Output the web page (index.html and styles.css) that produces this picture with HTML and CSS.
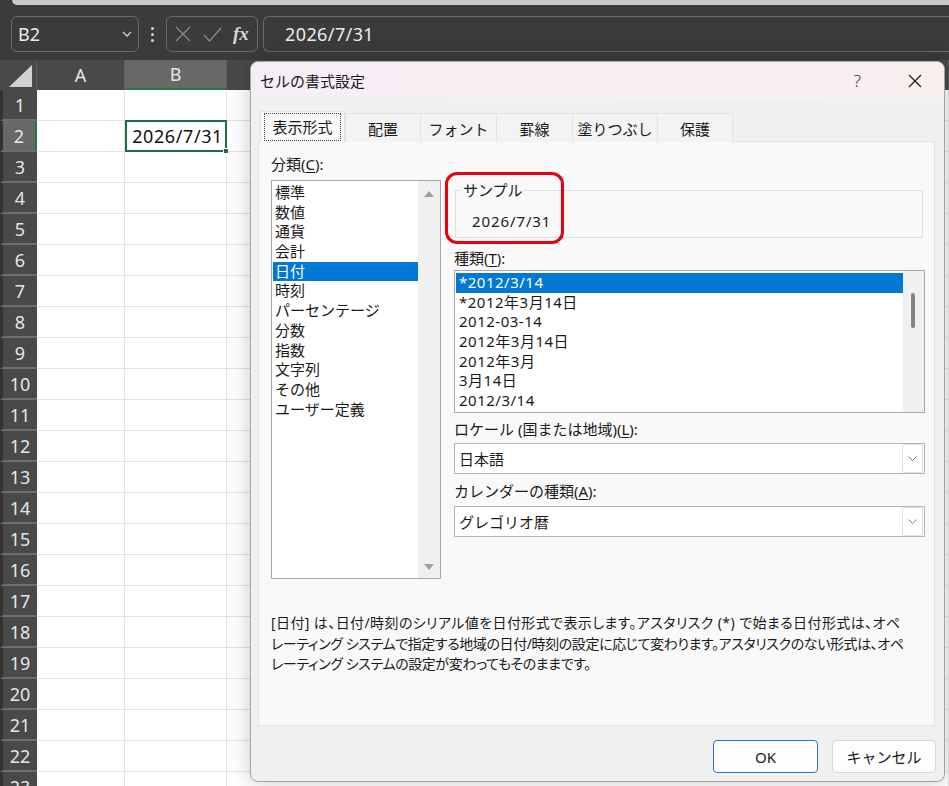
FILE: index.html
```html
<!DOCTYPE html>
<html lang="ja">
<head>
    <meta charset="UTF-8">
    <meta name="viewport" content="width=device-width, initial-scale=1.0">
    <title>セルの書式設定</title>
    <link rel="stylesheet" href="styles.css">
</head>
<body>
    <div class="ribbon-edge"></div>

    <div class="formula-bar">
        <div class="name-box">
            <span>B2</span>
            <svg width="10" height="6" viewBox="0 0 10 6"><path d="M1 1l4 4 4-4" fill="none" stroke="#d4d4d4" stroke-width="1.3"/></svg>
        </div>
        <div class="grip"><i></i><i></i><i></i></div>
        <div class="fx-box">
            <svg width="16" height="16" viewBox="0 0 16 16"><path d="M1 1l14 14M15 1L1 15" stroke="#8c8c8c" stroke-width="1.2"/></svg>
            <svg width="19" height="15" viewBox="0 0 19 15"><path d="M1 8l5.5 6L18 1" fill="none" stroke="#8c8c8c" stroke-width="1.2"/></svg>
            <span class="fx">fx</span>
        </div>
        <div class="formula-input">2026/7/31</div>
    </div>

    <div class="sheet">
        <div class="corner"><i></i></div>
        <div class="ch">A</div>
        <div class="ch sel">B</div>
        <div class="ch"></div>

        <div class="rh">1</div><div class="cell"></div><div class="cell"></div><div class="cell"></div>
        <div class="rh sel">2</div><div class="cell"></div><div class="cell active">2026/7/31<i></i></div><div class="cell"></div>
        <div class="rh">3</div><div class="cell"></div><div class="cell"></div><div class="cell"></div>
        <div class="rh">4</div><div class="cell"></div><div class="cell"></div><div class="cell"></div>
        <div class="rh">5</div><div class="cell"></div><div class="cell"></div><div class="cell"></div>
        <div class="rh">6</div><div class="cell"></div><div class="cell"></div><div class="cell"></div>
        <div class="rh">7</div><div class="cell"></div><div class="cell"></div><div class="cell"></div>
        <div class="rh">8</div><div class="cell"></div><div class="cell"></div><div class="cell"></div>
        <div class="rh">9</div><div class="cell"></div><div class="cell"></div><div class="cell"></div>
        <div class="rh">10</div><div class="cell"></div><div class="cell"></div><div class="cell"></div>
        <div class="rh">11</div><div class="cell"></div><div class="cell"></div><div class="cell"></div>
        <div class="rh">12</div><div class="cell"></div><div class="cell"></div><div class="cell"></div>
        <div class="rh">13</div><div class="cell"></div><div class="cell"></div><div class="cell"></div>
        <div class="rh">14</div><div class="cell"></div><div class="cell"></div><div class="cell"></div>
        <div class="rh">15</div><div class="cell"></div><div class="cell"></div><div class="cell"></div>
        <div class="rh">16</div><div class="cell"></div><div class="cell"></div><div class="cell"></div>
        <div class="rh">17</div><div class="cell"></div><div class="cell"></div><div class="cell"></div>
        <div class="rh">18</div><div class="cell"></div><div class="cell"></div><div class="cell"></div>
        <div class="rh">19</div><div class="cell"></div><div class="cell"></div><div class="cell"></div>
        <div class="rh">20</div><div class="cell"></div><div class="cell"></div><div class="cell"></div>
        <div class="rh">21</div><div class="cell"></div><div class="cell"></div><div class="cell"></div>
        <div class="rh">22</div><div class="cell"></div><div class="cell"></div><div class="cell"></div>
        <div class="rh">23</div><div class="cell"></div><div class="cell"></div><div class="cell"></div>
    </div>

    <div class="dialog">
        <div class="title-bar">
            <span class="title">セルの書式設定</span>
            <span class="help">?</span>
            <svg class="close" width="14" height="14" viewBox="0 0 14 14"><path d="M1 1l12 12M13 1L1 13" stroke="#1a1a1a" stroke-width="1.2"/></svg>
        </div>

        <div class="tabs">
            <div class="tab active"><span>表示形式</span></div>
            <div class="tab">配置</div>
            <div class="tab">フォント</div>
            <div class="tab">罫線</div>
            <div class="tab">塗りつぶし</div>
            <div class="tab">保護</div>
        </div>

        <div class="panel">
            <div class="panel-grid">
                <div class="left-col">
                    <div class="label">分類(<u>C</u>):</div>
                    <div class="listbox category">
                        <ul class="items">
                            <li>標準</li>
                            <li>数値</li>
                            <li>通貨</li>
                            <li>会計</li>
                            <li class="selected">日付</li>
                            <li>時刻</li>
                            <li>パーセンテージ</li>
                            <li>分数</li>
                            <li>指数</li>
                            <li>文字列</li>
                            <li>その他</li>
                            <li>ユーザー定義</li>
                        </ul>
                        <div class="scrollbar arrows">
                            <span class="arrow up"></span>
                            <span class="arrow down"></span>
                        </div>
                    </div>
                </div>

                <div class="right-col">
                    <div class="sample">
                        <div class="sample-label">サンプル</div>
                        <div class="sample-value">2026/7/31</div>
                    </div>
                    <div class="label types-label">種類(<u>T</u>):</div>
                    <div class="listbox types">
                        <ul class="items">
                            <li class="selected">*2012/3/14</li>
                            <li>*2012年3月14日</li>
                            <li>2012-03-14</li>
                            <li>2012年3月14日</li>
                            <li>2012年3月</li>
                            <li>3月14日</li>
                            <li>2012/3/14</li>
                        </ul>
                        <div class="scrollbar"><span class="thumb"></span></div>
                    </div>
                    <div class="label locale-label">ロケール (国または地域)(<u>L</u>):</div>
                    <div class="dropdown">
                        <span>日本語</span>
                        <span class="drop-btn"><svg width="9" height="5" viewBox="0 0 9 5"><path d="M0.5 0.5l4 4 4-4" fill="none" stroke="#7a7a7a"/></svg></span>
                    </div>
                    <div class="label calendar-label">カレンダーの種類(<u>A</u>):</div>
                    <div class="dropdown calendar">
                        <span>グレゴリオ暦</span>
                        <span class="drop-btn"><svg width="9" height="5" viewBox="0 0 9 5"><path d="M0.5 0.5l4 4 4-4" fill="none" stroke="#7a7a7a"/></svg></span>
                    </div>
                </div>
            </div>

            <div class="description">
                <span class="first">[日付] は、日付/時刻のシリアル値を日付形式で表示します。アスタリスク (*) で始まる日付形式は、オペ</span>
                <span>レーティング システムで指定する地域の日付/時刻の設定に応じて変わります。アスタリスクのない形式は、オペ</span>
                <span>レーティング システムの設定が変わってもそのままです。</span>
            </div>
        </div>

        <div class="buttons">
            <button class="btn default">OK</button>
            <button class="btn">キャンセル</button>
        </div>
    </div>

    <!-- red annotation round the sample -->
    <div class="highlight"></div>
</body>
</html>
```

FILE: styles.css
```css
* {
    box-sizing: border-box;
}

body {
    margin: 0;
    width: 949px;
    height: 786px;
    overflow: hidden;
    position: relative;
    background: #3b3b3b;
    font-family: "Noto Sans", "Noto Sans CJK JP", sans-serif;
    color: #1a1a1a;
}

/* ---- excel chrome ---- */

.ribbon-edge {
    height: 5px;
    margin-left: 12px;
    background: #c9c9c9;
    border-bottom-left-radius: 7px;
}

.formula-bar {
    display: flex;
    height: 36px;
    margin: 11px 0 0 11px;
    color: #ececec;
    font-size: 18px;
}

.name-box {
    width: 128px;
    border: 1px solid #6a6a6a;
    border-radius: 6px;
    display: flex;
    align-items: center;
    justify-content: space-between;
    padding: 0 6px 0 6px;
}

.grip {
    width: 27px;
    display: flex;
    flex-direction: column;
    align-items: center;
    justify-content: center;
    gap: 3px;
}

.grip i {
    width: 3px;
    height: 3px;
    border-radius: 50%;
    background: #cfcfcf;
}

.fx-box {
    width: 92px;
    border: 1px solid #6a6a6a;
    border-radius: 6px;
    display: flex;
    align-items: center;
    padding-left: 8px;
    gap: 12px;
}

.fx {
    font-family: "Liberation Serif", serif;
    font-style: italic;
    font-weight: bold;
    font-size: 19px;
    color: #d6d6d6;
    margin-left: -1px;
}

.formula-input {
    flex: 1;
    margin-left: 5px;
    border: 1px solid #6a6a6a;
    border-right: none;
    border-radius: 6px 0 0 6px;
    padding-left: 21px;
    display: flex;
    align-items: center;
    letter-spacing: 0.4px;
}

.sheet {
    margin-top: 8px;
    display: grid;
    grid-template-columns: 37px 88px 102px 1fr;
    grid-template-rows: 30px;
    grid-auto-rows: 31px;
}

.corner, .ch, .rh {
    background: #494949;
    color: #e6e6e6;
    font-size: 18px;
    display: flex;
    align-items: center;
    justify-content: center;
}

.corner {
    position: relative;
    border-right: 1px solid #5e5e5e;
}

.corner i {
    position: absolute;
    right: 4px;
    bottom: 3px;
    width: 0;
    height: 0;
    border-left: 23px solid transparent;
    border-bottom: 22px solid #d2d2d2;
}

.ch {
    border-right: 1px solid #5e5e5e;
}

.ch.sel {
    background: #686868;
    border-bottom: 2px solid #1f7a45;
}

.rh {
    border-bottom: 2px solid #6d6d6d;
    border-left: 3px solid #333;
}

.rh.sel {
    background: #686868;
    border-right: 2px solid #1f7a45;
}

.cell {
    background: #fff;
    border-right: 1px solid #e2e2e2;
    border-bottom: 1px solid #e2e2e2;
}

.cell.active {
    position: relative;
    border: 2px solid #1e6e42;
    margin: -1px 0 0 0;
    display: flex;
    align-items: center;
    justify-content: flex-end;
    padding-right: 2px;
    font-size: 18px;
    letter-spacing: 0.6px;
    color: #111;
}

.cell.active i {
    position: absolute;
    right: -4px;
    bottom: -4px;
    width: 6px;
    height: 6px;
    background: #1e6e42;
    border: 1px solid #fff;
}

/* ---- dialog ---- */

.dialog {
    position: absolute;
    left: 250px;
    top: 61px;
    width: 695px;
    height: 721px;
    background: #f0f0f0;
    border: 1px solid #a3a3a3;
    border-radius: 8px;
    box-shadow: 0 0 22px rgba(0, 0, 0, 0.22);
    overflow: hidden;
    font-size: 15px;
}

.title-bar {
    height: 37px;
    background: linear-gradient(90deg, #f6eef5, #f8f0ef);
    display: flex;
    align-items: center;
    padding-left: 9px;
}

.title {
    flex: 1;
}

.help {
    font-size: 17px;
    font-weight: 300;
    color: #333;
    margin-right: 47px;
}

.close {
    margin-right: 22px;
}

.tabs {
    display: flex;
    align-items: flex-end;
    margin: 12px 0 -1px 9px;
    position: relative;
    z-index: 1;
}

.tab {
    height: 29px;
    width: 76px;
    display: flex;
    align-items: center;
    justify-content: center;
    background: #f3f3f3;
    border: 1px solid #e2e2e2;
    border-bottom: none;
    border-left: none;
}

.tab:nth-child(2) {
    border-left: 1px solid #e2e2e2;
}

.tab:nth-child(5) {
    width: 85px;
}

.tab:nth-child(6) {
    width: 75px;
}

.tab.active {
    width: 85px;
    height: 31px;
    background: #f9f9f9;
    border-left: 1px solid #e2e2e2;
    padding-bottom: 1px;
}

.tab.active span {
    outline: 1px dotted #444;
    padding: 2px 7px;
    line-height: 22px;
}

.panel {
    margin-left: 7px;
    width: 677px;
    height: 585px;
    background: #f9f9f9;
    border: 1px solid #e2e2e2;
    padding: 12px 0 0 12px;
}

.panel-grid {
    display: grid;
    grid-template-columns: 170px 471px;
    column-gap: 13px;
}

.label {
    line-height: 20px;
}

.label u {
    text-underline-offset: 2px;
}

.listbox {
    background: #fff;
    border: 1px solid #a8a8a8;
    display: flex;
    margin-top: 6px;
}

.listbox.category {
    height: 399px;
}

.items {
    list-style: none;
    margin: 0;
    padding: 2px 0 0 1px;
    flex: 1;
}

.items li {
    line-height: 19.7px;
    height: 19.7px;
    padding-left: 2px;
    white-space: nowrap;
}

.items li.selected {
    background: #0078d4;
    color: #fff;
}

.scrollbar {
    width: 22px;
    background: #f0f0f0;
    position: relative;
}

.arrow {
    position: absolute;
    left: 6px;
    width: 0;
    height: 0;
    border-left: 5px solid transparent;
    border-right: 5px solid transparent;
}

.arrow.up {
    top: 10px;
    border-bottom: 6px solid #a0a0a0;
}

.arrow.down {
    bottom: 8px;
    border-top: 6px solid #a0a0a0;
}

.right-col {
    display: flex;
    flex-direction: column;
}

.sample {
    height: 48px;
    margin: 36px 2px 0 1px;
    border: 1px solid #dedede;
}

.sample-label {
    width: fit-content;
    margin: -11px 0 0 6px;
    padding: 0 1px;
    background: #f9f9f9;
    line-height: 20px;
}

.sample-value {
    margin-top: 11px;
    padding-left: 16px;
    line-height: 20px;
    letter-spacing: 0.9px;
}

.types-label {
    margin-top: 10px;
}

.listbox.types {
    height: 143px;
    margin-top: 2px;
}

.types .items {
    padding-left: 1px;
}

.types .items li {
    padding-left: 3px;
    letter-spacing: 0.5px;
}

.types .scrollbar {
    width: 21px;
}

.thumb {
    position: absolute;
    left: 8px;
    top: 22px;
    width: 4px;
    height: 35px;
    border-radius: 2px;
    background: #858585;
}

.locale-label {
    margin-top: 6px;
}

.calendar-label {
    margin-top: 7px;
}

.dropdown {
    height: 31px;
    margin-top: 4px;
    background: #fff;
    border: 1px solid #b4b4b4;
    display: flex;
    align-items: center;
    justify-content: space-between;
    padding: 0 1px 0 4px;
}

.dropdown.calendar {
    margin-top: 5px;
}

.drop-btn {
    width: 21px;
    height: 29px;
    border: 1px solid #e0e0e0;
    border-radius: 2px;
    display: flex;
    align-items: center;
    justify-content: center;
}

.description {
    margin-top: 34px;
    font-size: 14px;
    line-height: 20.5px;
    font-feature-settings: "palt" 1;
    letter-spacing: -0.4px;
}

.description span {
    display: block;
    white-space: nowrap;
}

.description .first {
    letter-spacing: 0.4px;
}

.buttons {
    display: flex;
    justify-content: flex-end;
    gap: 14px;
    margin: 14px 8px 0 0;
}

.btn {
    width: 104px;
    height: 33px;
    font-family: inherit;
    font-size: 15px;
    color: #1a1a1a;
    background: #fdfdfd;
    border: 1px solid #d6d6d6;
    border-radius: 4px;
}

.btn.default {
    width: 105px;
    border-color: #2b73c2;
}

.highlight {
    position: absolute;
    left: 445px;
    top: 172px;
    width: 119px;
    height: 72px;
    border: 3px solid #e8000b;
    border-radius: 12px;
}
```
